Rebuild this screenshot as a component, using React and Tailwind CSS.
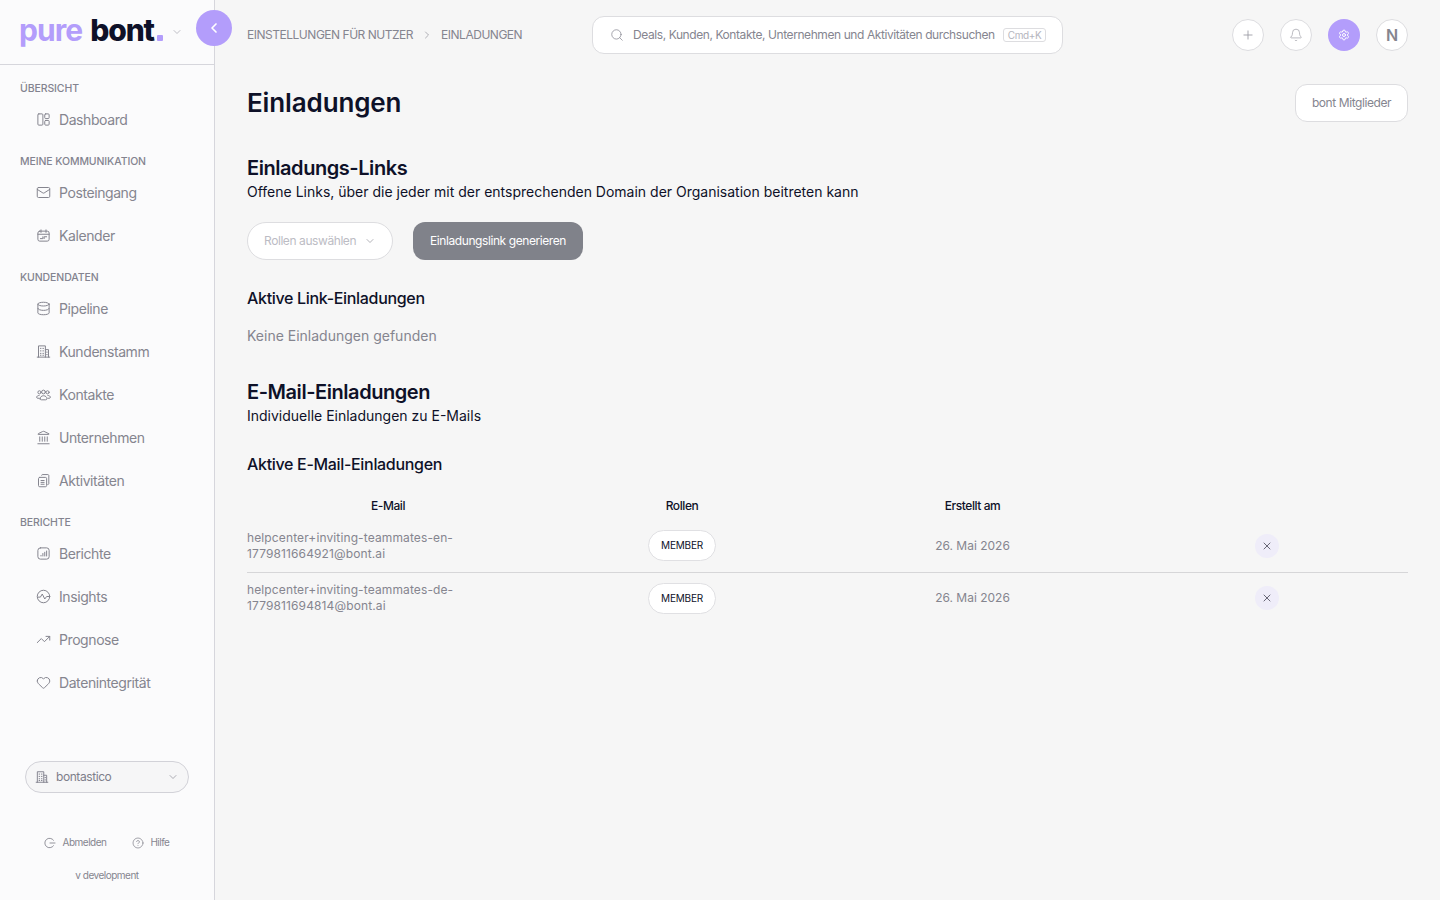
import {
  ChevronDown, ChevronLeft, ChevronRight, Mail, Database,
  Landmark, TrendingUp, Heart, CircleHelp, Search, Plus, Bell, Settings, X,
} from "lucide-react";

const font = { fontFamily: "Inter, sans-serif" };

// small helper for the icons lucide has no close match for
function Ico({ className, sw = 1.6, children }) {
  return (
    <svg className={className} viewBox="0 0 24 24" fill="none" stroke="currentColor" strokeWidth={sw} strokeLinecap="round" strokeLinejoin="round">
      {children}
    </svg>
  );
}

const DashIcon = (p) => (
  <Ico {...p}>
    <rect x="3" y="3" width="8" height="18" rx="1.5" />
    <rect x="14" y="3" width="7" height="7.5" rx="1.5" />
    <rect x="14" y="13.5" width="7" height="7.5" rx="1.5" />
  </Ico>
);
const CalIcon = (p) => (
  <Ico {...p}>
    <rect x="3" y="5" width="18" height="16" rx="3" />
    <path d="M8 3v4M16 3v4M3 10h18M7 17h4v-3M13 17v-3h4" />
  </Ico>
);
const BuildingIcon = (p) => (
  <Ico {...p}>
    <path d="M2 21h20M4 21V3h11v18M15 9h5v12M7 7h1M11 7h1M7 11h1M11 11h1M7 15h1M11 15h1M7 18h1M11 18h1M17 13h1M17 17h1" />
  </Ico>
);
const PeopleIcon = (p) => (
  <Ico {...p}>
    <circle cx="12" cy="8" r="3" />
    <circle cx="5.5" cy="8.5" r="2.5" />
    <circle cx="18.5" cy="8.5" r="2.5" />
    <path d="M6.5 19c0-3 2.3-5 5.5-5s5.500 2 5.500 5c0 1-1 1.500-2 1.500H8.500c-1 0-2-.5-2-1.500zM5 13.500c-2.500 0-4 1.500-4 3 0 1 .8 1.500 2 1.500h2M19 13.500c2.500 0 4 1.500 4 3 0 1-.8 1.500-2 1.500h-2" />
  </Ico>
);
const DocsIcon = (p) => (
  <Ico {...p}>
    <rect x="4" y="7" width="13" height="15" rx="2" />
    <path d="M9 3.500c0-.3.500-1 1-1h9c.6 0 1.500.6 1.500 1.500v13c0 .8-.6 1.500-1.500 1.500M8 12h5M8 15h5M8 18h5" />
  </Ico>
);
const ReportIcon = (p) => (
  <Ico {...p}>
    <rect x="3" y="3" width="18" height="18" rx="4" />
    <path d="M8 16v-1M11 16v-4M14 16v-6M17 16V8" />
  </Ico>
);
const InsightIcon = (p) => (
  <Ico {...p}>
    <circle cx="12" cy="12" r="10" />
    <path d="M3 13h4l3-5 4 8 3-4h4" />
  </Ico>
);
const LogoutIcon = (p) => (
  <Ico {...p}>
    <path d="M19 6.500A9.500 9.500 0 1 0 19 17.500M12 12h10" />
  </Ico>
);

const sections = [
  { label: "Übersicht", items: [{ name: "Dashboard", icon: DashIcon }] },
  {
    label: "Meine Kommunikation",
    items: [{ name: "Posteingang", icon: Mail }, { name: "Kalender", icon: CalIcon }],
  },
  {
    label: "Kundendaten",
    items: [
      { name: "Pipeline", icon: Database },
      { name: "Kundenstamm", icon: BuildingIcon },
      { name: "Kontakte", icon: PeopleIcon },
      { name: "Unternehmen", icon: Landmark },
      { name: "Aktivitäten", icon: DocsIcon },
    ],
  },
  {
    label: "Berichte",
    items: [
      { name: "Berichte", icon: ReportIcon },
      { name: "Insights", icon: InsightIcon },
      { name: "Prognose", icon: TrendingUp },
      { name: "Datenintegrität", icon: Heart },
    ],
  },
];

const invites = [
  ["helpcenter+inviting-teammates-en-", "1779811664921@bont.ai"],
  ["helpcenter+inviting-teammates-de-", "1779811694814@bont.ai"],
];

function Sidebar() {
  return (
    <aside className="relative w-[215px] shrink-0 h-screen flex flex-col bg-[#fbfbfc] border-r border-[#d6d6dc]">
      <div className="h-[65px] shrink-0 border-b border-[#d6d6dc] flex items-center pl-[19px]">
        <span className="flex items-baseline text-[30px] leading-none mt-[-4px]">
          <span className="text-[#b39dfb] font-bold tracking-[-0.03em]">pure</span>
          <span className="text-[#0e1128] font-extrabold tracking-[-0.04em] ml-[8px]">bont</span>
          <span className="w-[6px] h-[6px] ml-[3px] rounded-[1px] bg-[#b39dfb]" />
        </span>
        <ChevronDown className="w-3 h-3 ml-2 text-[#9a9aa5]" strokeWidth={1.25} />
      </div>
      <button className="absolute left-[196px] top-[10px] w-9 h-9 rounded-full bg-[#b39dfb] text-white flex items-center justify-center">
        <ChevronLeft className="w-4 h-4" strokeWidth={2.5} />
      </button>
      <nav className="pt-4 flex-1">
        {sections.map((s) => (
          <div key={s.label} className="mb-[13px]">
            <div className="h-4 mb-[1px] pl-5 flex items-center text-[10.5px] font-medium uppercase tracking-[-0.01em] text-[#83838f]">
              {s.label}
            </div>
            {s.items.map((it) => (
              <div key={it.name} className="h-[43px] pl-[36px] flex items-center gap-[8px] text-[14px] tracking-[-0.03em] text-[#85858f]">
                <it.icon className="w-[15px] h-[15px]" strokeWidth={1.6} />
                <span>{it.name}</span>
              </div>
            ))}
          </div>
        ))}
      </nav>
      <div className="px-[25px] mb-[42px]">
        <div className="h-8 rounded-full bg-[#f6f6f7] border border-[#d2d2d8] flex items-center pl-[9px] pr-[9px] gap-[7px] text-[12px] tracking-[-0.035em] text-[#7e7e8a]">
          <BuildingIcon className="w-[14px] h-[14px]" />
          <span className="flex-1">bontastico</span>
          <ChevronDown className="w-3 h-3" strokeWidth={1.25} />
        </div>
      </div>
      <div className="flex items-center justify-center gap-[26px] text-[10px] tracking-[-0.05em] text-[#85858f] pr-[1px]">
        <span className="flex items-center gap-[7px]"><LogoutIcon className="w-3 h-3" sw={1.75} />Abmelden</span>
        <span className="flex items-center gap-[6px]"><CircleHelp className="w-3 h-3" strokeWidth={1.5} />Hilfe</span>
      </div>
      <div className="mt-[19px] mb-[18px] text-center text-[10px] tracking-[-0.05em] leading-[13px] text-[#85858f]">v development</div>
    </aside>
  );
}

function Header() {
  return (
    <header className="h-[69px] shrink-0 flex items-center pl-8 pr-8 pt-[1px]">
      <div className="w-[345px] flex items-center text-[12px] uppercase tracking-[-0.04em] text-[#85858f]">
        <span>Einstellungen für Nutzer</span>
        <ChevronRight className="w-3 h-3 mx-[8px]" strokeWidth={1.25} />
        <span>Einladungen</span>
      </div>
      <div className="w-[471px] h-[38px] bg-white border border-[#dddde0] rounded-xl flex items-center pl-[17px] pr-4 text-[12px] tracking-[-0.035em] text-[#85858f]">
        <Search className="w-[14px] h-[14px] mr-[9px] shrink-0" strokeWidth={1.25} />
        <span className="flex-1 whitespace-nowrap">Deals, Kunden, Kontakte, Unternehmen und Aktivitäten durchsuchen</span>
        <span className="h-[14px] w-[43px] text-center rounded-[3px] border border-[#dddde0] text-[10px] leading-[12px] text-[#b5b5bd]">Cmd+K</span>
      </div>
      <div className="ml-auto flex items-center gap-4">
        <span className="w-8 h-8 rounded-full bg-white border border-[#dddde0] flex items-center justify-center text-[#9a9aa3]">
          <Plus className="w-[14px] h-[14px]" strokeWidth={1.5} />
        </span>
        <span className="w-8 h-8 rounded-full bg-white border border-[#dddde0] flex items-center justify-center text-[#a0a0a8]">
          <Bell className="w-[14px] h-[14px]" strokeWidth={1.25} />
        </span>
        <span className="w-8 h-8 rounded-full bg-[#b39dfb] flex items-center justify-center text-white">
          <Settings className="w-3 h-3" strokeWidth={2} />
        </span>
        <span className="w-8 h-8 rounded-full bg-white border border-[#dddde0] flex items-center justify-center text-[16px] font-semibold text-[#85858f]">
          N
        </span>
      </div>
    </header>
  );
}

function InviteRow({ lines, last }) {
  return (
    <div className={"grid grid-cols-[282px_306px_275px_1fr] items-center " + (last ? "h-[50px]" : "h-[54px] border-b border-[#d6d6d8]")}>
      <div className="text-[12px] leading-4 tracking-[0.01em] text-[#85858f]">
        {lines[0]}
        <br />
        {lines[1]}
      </div>
      <div className="flex justify-center">
        <span className="h-[31px] w-[68px] bg-white rounded-full border border-[#e0e0e3] flex items-center justify-center text-[10px] tracking-[-0.02em] text-[#0e1128]">
          MEMBER
        </span>
      </div>
      <div className="text-center text-[12px] text-[#85858f]">26. Mai 2026</div>
      <div className="flex justify-center pl-4">
        <span className="w-6 h-6 rounded-full bg-[#efedf9] flex items-center justify-center text-[#3a3a4a]">
          <X className="w-3 h-3" strokeWidth={1.5} />
        </span>
      </div>
    </div>
  );
}

export default function App() {
  return (
    <div className="flex h-screen overflow-hidden bg-[#f6f6f6]" style={font}>
      <Sidebar />
      <main className="flex-1 min-w-0 flex flex-col">
        <Header />
        <div className="px-8 pt-[15px]">
          <div className="flex items-center justify-between h-[38px]">
            <h1 className="text-[26px] pb-[2px] font-semibold tracking-[-0.005em] text-[#0e1128]">Einladungen</h1>
            <button className="h-[38px] w-[113px] bg-white border border-[#dddde0] rounded-xl text-[12px] tracking-[-0.035em] text-[#85858f]">
              bont Mitglieder
            </button>
          </div>

          <h2 className="mt-[32px] text-[20px] leading-7 font-semibold tracking-[-0.022em] text-[#0e1128]">Einladungs-Links</h2>
          <p className="text-[14px] leading-5 text-[#0e1128]">
            Offene Links, über die jeder mit der entsprechenden Domain der Organisation beitreten kann
          </p>
          <div className="mt-5 flex items-center gap-5">
            <div className="h-[38px] w-[146px] bg-white border border-[#dddde0] rounded-full flex items-center pl-4 gap-[8px] text-[12px] tracking-[-0.035em] text-[#bcbcc4]">
              Rollen auswählen
              <ChevronDown className="w-3 h-3 text-[#85858f]" strokeWidth={1.25} />
            </div>
            <button className="h-[38px] w-[170px] bg-[#80828a] rounded-xl text-[12px] tracking-[-0.035em] text-white">
              Einladungslink generieren
            </button>
          </div>

          <h3 className="mt-[26px] text-[16px] leading-6 font-medium tracking-[-0.02em] text-[#0e1128]">Aktive Link-Einladungen</h3>
          <p className="mt-[16px] text-[14px] leading-5 text-[#85858f]">Keine Einladungen gefunden</p>

          <h2 className="mt-[32px] text-[20px] leading-7 font-semibold tracking-[-0.022em] text-[#0e1128]">E-Mail-Einladungen</h2>
          <p className="text-[14px] leading-5 text-[#0e1128]">Individuelle Einladungen zu E-Mails</p>

          <h3 className="mt-[26px] text-[16px] leading-6 font-medium tracking-[-0.02em] text-[#0e1128]">Aktive E-Mail-Einladungen</h3>

          <div className="mt-[21px]">
            <div className="grid grid-cols-[282px_306px_275px_1fr] h-[16px] items-center text-center text-[12px] font-medium tracking-[-0.035em] text-[#0e1128]">
              <span>E-Mail</span>
              <span>Rollen</span>
              <span>Erstellt am</span>
              <span />
            </div>
            <div className="mt-[6px]">
              {invites.map((lines, i) => (
                <InviteRow key={lines[0]} lines={lines} last={i === invites.length - 1} />
              ))}
            </div>
          </div>
        </div>
      </main>
    </div>
  );
}
